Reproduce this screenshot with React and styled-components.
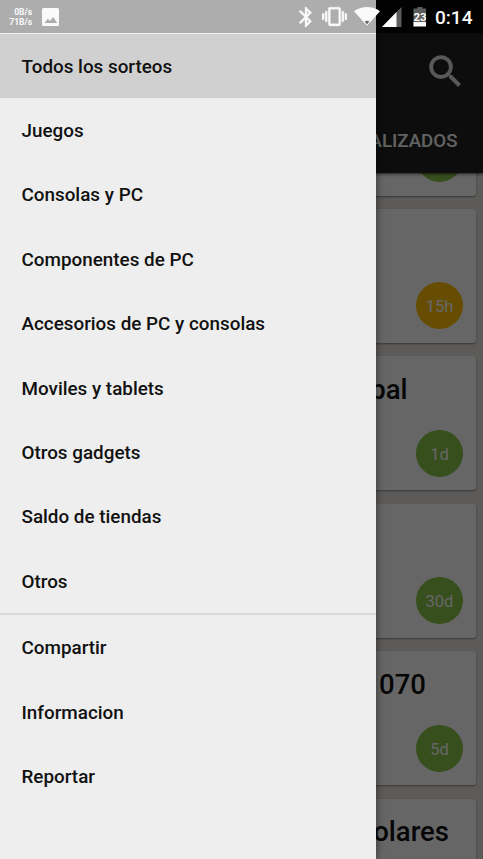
import React from "react";
import styled, { createGlobalStyle } from "styled-components";
import { MdBluetooth, MdSearch, MdVibration } from "react-icons/md";

const categories = [
  "Todos los sorteos",
  "Juegos",
  "Consolas y PC",
  "Componentes de PC",
  "Accesorios de PC y consolas",
  "Moviles y tablets",
  "Otros gadgets",
  "Saldo de tiendas",
  "Otros",
];

const actions = ["Compartir", "Informacion", "Reportar"];

const raffles = [
  { id: 1, time: "" },
  { id: 2, time: "15h", ending: true },
  { id: 3, title: "Principal", end: 68.5, time: "1d" },
  { id: 4, time: "30d" },
  { id: 5, title: "GTX 1070", end: 50, time: "5d" },
  { id: 6, title: "dolares", end: 27 },
];

function StatusBar() {
  return (
    <StyledStatusBar>
      <NetSpeed>
        <span>0B/s</span>
        <span>71B/s</span>
      </NetSpeed>
      <PictureIcon width="17" height="18" viewBox="0 0 17 18">
        <path
          fill="#fafafa"
          fillRule="evenodd"
          d="M1.5 0h14A1.5 1.5 0 0 1 17 1.500v15a1.500 1.500 0 0 1-1.500 1.500h-14A1.500 1.500 0 0 1 0 16.500v-15A1.500 1.500 0 0 1 1.500 0zM2.500 15h12.700l-4.100-6-3.100 4-2.200-2.200z"
        />
      </PictureIcon>
      <StatusIcons>
        <BluetoothIcon size={24} />
        <VibrationIcon size={25} />
        <WifiIcon width="26" height="19" viewBox="0 0 26 19">
          <path fill="#fafafa" d="M0 4.200Q13-4.200 26 4.200L13 18.700z" />
          <path fill="#666" d="M10.600 14.200Q13 13.200 15.400 14.200L13 17.600z" />
        </WifiIcon>
        <SignalIcon width="20" height="20" viewBox="0 0 20 20">
          <path fill="#5c5c5c" d="M19.500 0v20H0z" />
          <path fill="#fafafa" d="M14.500 5.100v14.900H0z" />
        </SignalIcon>
        <Battery>23</Battery>
      </StatusIcons>
      <Clock>0:14</Clock>
    </StyledStatusBar>
  );
}

function Raffle({ raffle }) {
  return (
    <Card>
      <Title $end={raffle.end}>{raffle.title}</Title>
      {raffle.time !== undefined && (
        <Time $ending={raffle.ending}>{raffle.time}</Time>
      )}
    </Card>
  );
}

function App() {
  return (
    <Screen>
      <GlobalStyle />
      <Page>
        <Header>
          <Toolbar>
            <SearchIcon size={43} />
          </Toolbar>
          <Tab>FINALIZADOS</Tab>
        </Header>
        <List>
          {raffles.map((raffle) => (
            <Raffle key={raffle.id} raffle={raffle} />
          ))}
        </List>
      </Page>
      <Scrim />
      <Drawer>
        {categories.map((name, i) => (
          <Item key={name} $active={i === 0}>
            {name}
          </Item>
        ))}
        <Divider />
        {actions.map((name) => (
          <Item key={name}>{name}</Item>
        ))}
      </Drawer>
      <StatusBar />
    </Screen>
  );
}

export default App;

const GlobalStyle = createGlobalStyle`
  * {
    box-sizing: border-box;
  }
  body {
    margin: 0;
    background: #000;
    font-family: Roboto, "Liberation Sans", sans-serif;
  }
`;

const Screen = styled.div`
  position: relative;
  width: 483px;
  height: 859px;
  overflow: hidden;
`;

const Page = styled.div`
  isolation: isolate;
  display: flex;
  flex-direction: column;
  height: 100%;
  background: #e6e4de;
`;

const Header = styled.header`
  flex: none;
  display: flex;
  flex-direction: column;
  align-items: flex-end;
  height: 173px;
  padding-top: 33px;
  background: #212121;
  box-shadow: 0 1px 3px rgba(0, 0, 0, 0.7);
  z-index: 1;
`;

const Toolbar = styled.div`
  flex: none;
  display: flex;
  align-items: center;
  height: 76px;
  padding-right: 16px;
  color: #ffffffd8;
`;

/* the first path is the empty bounding box of the icon */
const SearchIcon = styled(MdSearch)`
  path:last-child {
    stroke: currentColor;
    stroke-width: 0.2;
  }
`;

const Tab = styled.div`
  padding-right: 25.500px;
  line-height: 64px;
  font-size: 18.700px;
  font-weight: 500;
  color: #f5f5f5;
`;

const List = styled.div`
  display: flex;
  flex-direction: column;
  gap: 13.300px;
  margin-top: -111.700px;
  padding: 0 7px;
`;

const Card = styled.article`
  flex: none;
  display: flex;
  flex-direction: column;
  align-items: flex-end;
  justify-content: space-between;
  height: 134.200px;
  padding: 13.500px 13px;
  background: #fff;
  border-radius: 3px;
  box-shadow: 0 1px 2px rgba(0, 0, 0, 0.4);
`;

const Title = styled.div`
  height: 40px;
  margin-right: ${(props) => (props.$end || 13) - 13}px;
  line-height: 39px;
  font-size: 27.500px;
  font-weight: 500;
  color: #111;
`;

const Time = styled.div`
  width: 47px;
  height: 47px;
  line-height: 49px;
  border-radius: 50%;
  text-align: center;
  font-size: 16.500px;
  color: #fff;
  background: ${(props) => (props.$ending ? "#ffc107" : "#8bc34a")};
`;

const Scrim = styled.div`
  position: absolute;
  inset: 0;
  background: rgba(0, 0, 0, 0.6);
`;

const Drawer = styled.nav`
  position: absolute;
  top: 0;
  bottom: 0;
  left: 0;
  width: 376px;
  padding-top: 33.500px;
  background: #eee;
  box-shadow: 0 0 8px rgba(0, 0, 0, 0.5);
`;

const Item = styled.div`
  height: 64.420px;
  padding-left: 21.500px;
  line-height: 66px;
  font-size: 18.850px;
  font-weight: 500;
  color: #111;
  background: ${(props) => (props.$active ? "#d0d0d0" : "transparent")};
`;

const Divider = styled.div`
  height: 2px;
  background: #d8d8d8;
`;

const StyledStatusBar = styled.div`
  position: absolute;
  top: 0;
  left: 0;
  right: 0;
  display: flex;
  align-items: center;
  height: 33px;
  padding: 0 10.500px 0 8px;
  color: #fafafa;
  background: linear-gradient(to right, #adadad 376px, #020202 376px);
`;

const NetSpeed = styled.div`
  display: flex;
  flex-direction: column;
  width: 24px;
  text-align: right;
  font-size: 8.500px;
  font-weight: 700;
  line-height: 9.500px;
  padding-top: 2px;
`;

const PictureIcon = styled.svg`
  margin-left: 10px;
`;

const StatusIcons = styled.div`
  display: flex;
  align-items: center;
  margin-left: auto;
`;

const BluetoothIcon = styled(MdBluetooth)`
  path:last-child {
    stroke: currentColor;
    stroke-width: 0.3;
  }
`;

const VibrationIcon = styled(MdVibration)`
  margin-left: 4px;
  path:last-child {
    stroke: currentColor;
    stroke-width: 0.3;
  }
`;

const WifiIcon = styled.svg`
  margin-left: 7px;
`;

const SignalIcon = styled.svg`
  margin-left: 2px;
`;

const Battery = styled.div`
  display: flex;
  justify-content: center;
  width: 13px;
  height: 20px;
  margin-left: 11px;
  padding-top: 4px;
  font-size: 11.500px;
  font-weight: 700;
  letter-spacing: -0.2px;
  line-height: 12px;
  clip-path: polygon(0 2px, 4px 2px, 4px 0, 9px 0, 9px 2px, 100% 2px, 100% 100%, 0 100%);
  background: linear-gradient(#5c5c5c 15px, #fafafa 15px);
`;

const Clock = styled.div`
  margin-left: 8.500px;
  font-size: 19.100px;
  font-weight: 500;
  line-height: 34px;
  padding-top: 3px;
`;
